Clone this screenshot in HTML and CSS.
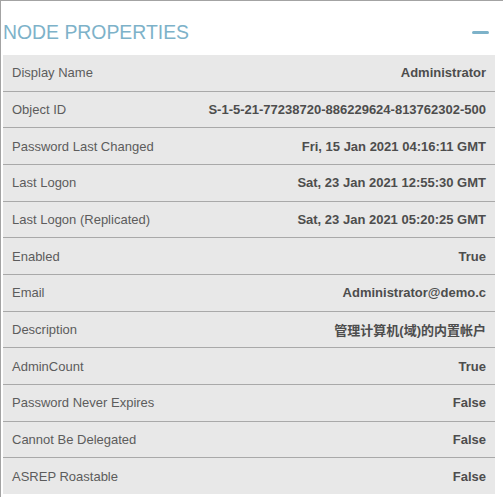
FILE: index.html
```html
<!DOCTYPE html>
<html>
<head>
<meta charset="utf-8">
<link rel="stylesheet" href="styles.css">
</head>
<body>
<div class="panel">
  <div class="header">
    <h2 class="title">NODE PROPERTIES</h2>
    <span class="collapse"></span>
  </div>
  <div class="table">
    <div class="row"><span class="label">Display Name</span><span class="value">Administrator</span></div>
    <div class="row"><span class="label">Object ID</span><span class="value">S-1-5-21-77238720-886229624-813762302-500</span></div>
    <div class="row"><span class="label">Password Last Changed</span><span class="value">Fri, 15 Jan 2021 04:16:11 GMT</span></div>
    <div class="row"><span class="label">Last Logon</span><span class="value">Sat, 23 Jan 2021 12:55:30 GMT</span></div>
    <div class="row"><span class="label">Last Logon (Replicated)</span><span class="value">Sat, 23 Jan 2021 05:20:25 GMT</span></div>
    <div class="row"><span class="label">Enabled</span><span class="value">True</span></div>
    <div class="row"><span class="label">Email</span><span class="value">Administrator@demo.c</span></div>
    <div class="row"><span class="label">Description</span><span class="value">管理计算机(域)的内置帐户</span></div>
    <div class="row"><span class="label">AdminCount</span><span class="value">True</span></div>
    <div class="row"><span class="label">Password Never Expires</span><span class="value">False</span></div>
    <div class="row"><span class="label">Cannot Be Delegated</span><span class="value">False</span></div>
    <div class="row"><span class="label">ASREP Roastable</span><span class="value">False</span></div>
  </div>
</div>
</body>
</html>
```
FILE: styles.css
```css
html, body {
  margin: 0;
  padding: 0;
  background: #ffffff;
}
body {
  font-family: "Liberation Sans", "Noto Sans CJK SC", Arial, sans-serif;
}
.panel {
  border-top: 1px solid #a3a3a3;
  border-left: 1px solid #a3a3a3;
  height: 497px;
  box-sizing: border-box;
  padding: 0 8px 0 2px;
}
.header {
  display: flex;
  align-items: center;
  justify-content: space-between;
  height: 46px;
  padding-top: 8px;
}
.title {
  margin: 0;
  font-size: 19.4px;
  font-weight: normal;
  color: #7db2c9;
}
.collapse {
  display: block;
  width: 17px;
  height: 3px;
  border-radius: 2px;
  background: #7db2c9;
  margin-right: 6px;
  margin-top: 1px;
}
.table {
  display: flex;
  flex-direction: column;
  background: #e8e8e8;
}
.row {
  display: flex;
  align-items: center;
  justify-content: space-between;
  height: 36.67px;
  box-sizing: border-box;
  padding: 0 9px;
  border-bottom: 1px solid #a9a9a9;
  font-size: 13px;
}
.row:last-child {
  border-bottom: none;
  height: 35.67px;
}
.label {
  color: #5c5c5c;
}
.value {
  color: #4d4d4d;
  font-weight: bold;
}
```
